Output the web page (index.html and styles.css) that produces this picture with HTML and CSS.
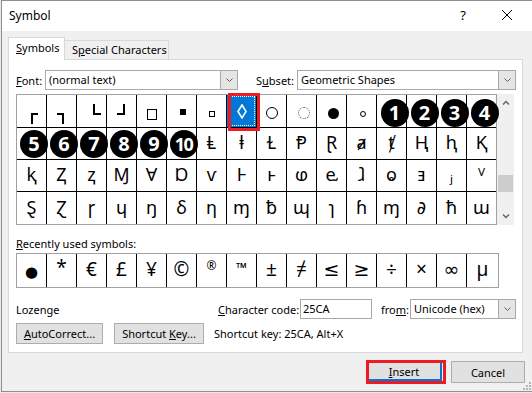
FILE: index.html
```html
<!DOCTYPE html>
<html lang="en">

<head>
    <meta charset="UTF-8">
    <meta name="viewport" content="width=device-width, initial-scale=1.0">
    <title>Symbol</title>
    <link rel="stylesheet" href="styles.css">
</head>

<body>
    <div class="dialog">
        <div class="titlebar">
            <span class="title">Symbol</span>
            <span class="tb-btn">?</span>
            <span class="tb-btn">
                <svg width="10" height="10" viewBox="0 0 10 10"><path d="M0 0L10 10M10 0L0 10" stroke="#000" stroke-width="1"/></svg>
            </span>
        </div>

        <div class="tabs">
            <div class="tab active"><u>S</u>ymbols</div>
            <div class="tab tab-spec">S<u>p</u>ecial Characters</div>
        </div>

        <div class="panel">
            <div class="font-row">
                <span class="lbl-font"><u>F</u>ont:</span>
                <div class="combo combo-font">
                    <span class="combo-text">(normal text)</span>
                    <span class="drop"><svg width="7" height="4" viewBox="0 0 7 4"><path d="M0.5 0.5L3.5 3.5L6.5 0.5" fill="none" stroke="#606060"/></svg></span>
                </div>
                <span class="lbl-subset">S<u>u</u>bset:</span>
                <div class="combo combo-subset">
                    <span class="combo-text">Geometric Shapes</span>
                    <span class="drop"><svg width="7" height="4" viewBox="0 0 7 4"><path d="M0.5 0.5L3.5 3.5L6.5 0.5" fill="none" stroke="#606060"/></svg></span>
                </div>
            </div>

            <div class="charmap">
                <div class="grid">
                    <!-- row 1 -->
                    <div class="s"><span class="crn crn-a"></span></div>
                    <div class="s"><span class="crn crn-b"></span></div>
                    <div class="s"><span class="crn crn-c"></span></div>
                    <div class="s"><span class="crn crn-d"></span></div>
                    <div class="s"><span class="sq-big"></span></div>
                    <div class="s"><span class="sq-fill"></span></div>
                    <div class="s"><span class="sq-small"></span></div>
                    <div class="s sel">
                        <svg width="10" height="15" viewBox="0 0 10 15"><path d="M5 1L9 7.5L5 14L1 7.5Z" fill="none" stroke="#fff" stroke-width="1.6"/></svg>
                        <span class="mark"></span>
                    </div>
                    <div class="s"><span class="ring"></span></div>
                    <div class="s"><span class="ring-dot"></span></div>
                    <div class="s"><span class="disc"></span></div>
                    <div class="s"><span class="ring-sm"></span></div>
                    <div class="s"><b class="num r1">1</b></div>
                    <div class="s"><b class="num r1">2</b></div>
                    <div class="s"><b class="num r1">3</b></div>
                    <div class="s"><b class="num r1">4</b></div>
                    <!-- row 2 -->
                    <div class="s"><b class="num">5</b></div>
                    <div class="s"><b class="num">6</b></div>
                    <div class="s"><b class="num">7</b></div>
                    <div class="s"><b class="num">8</b></div>
                    <div class="s"><b class="num">9</b></div>
                    <div class="s"><b class="num ten">10</b></div>
                    <div>Ⱡ</div>
                    <div>ⱡ</div>
                    <div>Ɫ</div>
                    <div>Ᵽ</div>
                    <div>Ɽ</div>
                    <div>ⱥ</div>
                    <div>ⱦ</div>
                    <div>Ⱨ</div>
                    <div>ⱨ</div>
                    <div>Ⱪ</div>
                    <!-- row 3 -->
                    <div>ⱪ</div>
                    <div>Ⱬ</div>
                    <div>ⱬ</div>
                    <div>Ɱ</div>
                    <div>Ɐ</div>
                    <div>Ɒ</div>
                    <div>ⱱ</div>
                    <div>Ⱶ</div>
                    <div>ⱶ</div>
                    <div>ⱷ</div>
                    <div>ⱸ</div>
                    <div>ⱹ</div>
                    <div>ⱺ</div>
                    <div>ⱻ</div>
                    <div>ⱼ</div>
                    <div>ⱽ</div>
                    <!-- row 4 -->
                    <div>Ȿ</div>
                    <div>Ɀ</div>
                    <div>ɼ</div>
                    <div>ɥ</div>
                    <div>ŋ</div>
                    <div>δ</div>
                    <div>η</div>
                    <div>ɱ</div>
                    <div>ƀ</div>
                    <div>ɰ</div>
                    <div>ɿ</div>
                    <div>ɦ</div>
                    <div>ɱ</div>
                    <div>∂</div>
                    <div>ħ</div>
                    <div>ɯ</div>
                </div>
                <div class="scrollbar">
                    <div class="sb-arrow"><svg width="8" height="5" viewBox="0 0 8 5"><path d="M1 4.5L4 1.5L7 4.5" fill="none" stroke="#606060" stroke-width="1.4"/></svg></div>
                    <div class="sb-track"><div class="sb-thumb"></div></div>
                    <div class="sb-arrow"><svg width="8" height="5" viewBox="0 0 8 5"><path d="M1 0.5L4 3.5L7 0.5" fill="none" stroke="#606060" stroke-width="1.4"/></svg></div>
                </div>
            </div>

            <div class="recent-label"><u>R</u>ecently used symbols:</div>
            <div class="recent">
                <div><span class="bullet">●</span></div>
                <div><span class="star">*</span></div>
                <div>€</div>
                <div>£</div>
                <div>¥</div>
                <div>©</div>
                <div><span class="reg">®</span></div>
                <div><span class="tm">™</span></div>
                <div>±</div>
                <div>≠</div>
                <div>≤</div>
                <div>≥</div>
                <div>÷</div>
                <div>×</div>
                <div>∞</div>
                <div>µ</div>
            </div>

            <div class="info-row">
                <span class="name">Lozenge</span>
                <span class="lbl-code"><u>C</u>haracter code:</span>
                <span class="input">25CA</span>
                <span class="lbl-from">fro<u>m</u>:</span>
                <div class="combo combo-from">
                    <span class="combo-text">Unicode (hex)</span>
                    <span class="drop"><svg width="7" height="4" viewBox="0 0 7 4"><path d="M0.5 0.5L3.5 3.5L6.5 0.5" fill="none" stroke="#606060"/></svg></span>
                </div>
            </div>

            <div class="btn-row">
                <button class="btn btn-auto"><u>A</u>utoCorrect...</button>
                <button class="btn btn-key">Shortcut <u>K</u>ey...</button>
                <span class="key-text">Shortcut key: 25CA, Alt+X</span>
            </div>
        </div>

        <div class="footer">
            <div class="insert-wrap">
                <button class="btn btn-insert"><u>I</u>nsert</button>
                <span class="red-mark"></span>
            </div>
            <button class="btn btn-cancel">Cancel</button>
        </div>

        <svg class="grip" width="8" height="8" viewBox="0 0 8 8">
            <rect x="6" y="0" width="2" height="2" fill="#b5b5b5"/>
            <rect x="3" y="3" width="2" height="2" fill="#b5b5b5"/>
            <rect x="6" y="3" width="2" height="2" fill="#b5b5b5"/>
            <rect x="0" y="6" width="2" height="2" fill="#b5b5b5"/>
            <rect x="3" y="6" width="2" height="2" fill="#b5b5b5"/>
            <rect x="6" y="6" width="2" height="2" fill="#b5b5b5"/>
        </svg>
    </div>
</body>

</html>
```

FILE: styles.css
```css
* {
    margin: 0;
    padding: 0;
    box-sizing: border-box;
}

html,
body {
    width: 100%;
    height: 100%;
    overflow: hidden;
}

body {
    background: #e9e9e9;
    font-family: "Noto Sans", "DejaVu Sans", sans-serif;
    font-size: 11px;
    color: #000;
}

u {
    text-decoration: underline;
    text-underline-offset: 1px;
}

.dialog {
    position: relative;
    margin-left: 1px;
    width: 531px;
    height: 392px;
    background: #f0f0f0;
    border-left: 1px solid #8f8f8f;
    border-bottom: 1px solid #8f8f8f;
}

/* title bar */
.titlebar {
    height: 31px;
    background: #fff;
    border-top: 1px solid #8f8f8f;
    display: flex;
    align-items: center;
    padding: 0 3px 2px 7px;
}

.title {
    flex: 1;
    font-size: 12px;
}

.tb-btn {
    width: 44px;
    display: flex;
    justify-content: center;
    font-size: 13px;
}

/* tabs */
.tabs {
    display: flex;
    align-items: flex-end;
    height: 28px;
    padding-left: 6px;
    position: relative;
    z-index: 1;
}

.tab {
    height: 19px;
    border: 1px solid #d9d9d9;
    border-bottom: 0;
    background: #f0f0f0;
    padding-left: 7px;
    line-height: 18px;
}

.tab.active {
    width: 57px;
    height: 23px;
    margin-bottom: -1px;
    background: #fff;
    line-height: 19px;
}

.tab-spec {
    width: 104px;
    border-left: 0;
}

.panel {
    margin-left: 6px;
    width: 515px;
    height: 294px;
    background: #fff;
    border: 1px solid #d9d9d9;
    padding: 10px 0 0 7px;
}

/* combos */
.font-row {
    display: flex;
    align-items: center;
    height: 20px;
}

.lbl-font {
    width: 29px;
}

.lbl-subset {
    width: 41px;
    margin-left: 18px;
}

.combo {
    display: flex;
    height: 20px;
    border: 1px solid #a9a9a9;
    background: #fff;
}

.combo-font {
    width: 193px;
}

.combo-subset {
    width: 219px;
}

.combo-from {
    width: 106px;
}

.combo-text {
    flex: 1;
    padding-left: 3px;
    line-height: 18px;
    white-space: nowrap;
}

.drop {
    width: 17px;
    background: #e5e5e5;
    border-left: 1px solid #a9a9a9;
    display: flex;
    align-items: center;
    justify-content: center;
}

/* character grid */
.charmap {
    display: flex;
    margin-top: 4px;
    height: 131px;
}

.grid {
    display: grid;
    grid-template-columns: repeat(16, 29px);
    grid-template-rows: 32px 31px 31px 32px;
    gap: 1px;
    background: #000;
    border: 1px solid #a0a0a0;
}

.grid > div {
    background: #fff;
    display: flex;
    align-items: center;
    justify-content: center;
    font-size: 18px;
    line-height: 1;
    padding-bottom: 3px;
}

.grid > div.s {
    padding-bottom: 0;
}

.grid > div.sel {
    position: relative;
    background: #0078d7;
    outline: 1px dotted #fff;
    outline-offset: -2px;
}

.mark {
    position: absolute;
    left: 1px;
    top: -2px;
    width: 32px;
    height: 38px;
    border: 3px solid #ed1c24;
    z-index: 2;
}

.crn {
    width: 7px;
    height: 11px;
    border: 0 solid #000;
}

.crn-a {
    border-top-width: 2px;
    border-left-width: 2px;
    margin: 14px 0 0 6px;
}

.crn-b {
    border-top-width: 2px;
    border-right-width: 2px;
    margin: 14px 2px 0 0;
}

.crn-c {
    width: 8px;
    border-bottom-width: 2px;
    border-left-width: 2px;
    margin: 0 0 4px 10px;
}

.crn-d {
    width: 8px;
    border-bottom-width: 2px;
    border-right-width: 2px;
    margin: 0 1px 4px 0;
}

.sq-big {
    width: 10px;
    height: 11px;
    border: 1px solid #000;
    margin-top: 6px;
}

.sq-fill {
    width: 6px;
    height: 6px;
    background: #000;
    margin: 1px 0 0 2px;
}

.sq-small {
    width: 6px;
    height: 6px;
    border: 1px solid #000;
    margin: 5px 0 0 1px;
}

.ring {
    width: 12px;
    height: 12px;
    border: 1.5px solid #000;
    border-radius: 50%;
    margin-top: 3px;
}

.ring-dot {
    width: 12px;
    height: 12px;
    border: 1px dotted #555;
    border-radius: 50%;
    margin: 4px 0 0 5px;
}

.disc {
    width: 11px;
    height: 11px;
    background: #000;
    border-radius: 50%;
    margin: 4px 0 0 3px;
}

.ring-sm {
    width: 6px;
    height: 6px;
    border: 1px solid #000;
    border-radius: 50%;
    margin: 5px 0 0 2px;
}

.num {
    position: relative;
    z-index: 1;
    flex: none;
    width: 28px;
    height: 28px;
    border-radius: 50%;
    background: #000;
    color: #fff;
    font-size: 20px;
    line-height: 28px;
    text-align: center;
    margin-left: 5px;
}

.num.r1 {
    margin: 4px 0 0 6px;
}

.num.ten {
    font-size: 18px;
    letter-spacing: -1.5px;
    text-indent: -1px;
}

/* scrollbar */
.scrollbar {
    width: 17px;
    background: #f0f0f0;
    display: flex;
    flex-direction: column;
}

.sb-arrow {
    height: 17px;
    display: flex;
    align-items: center;
    justify-content: center;
}

.sb-track {
    flex: 1;
}

.sb-thumb {
    height: 17px;
    margin: 64px 1px 0;
    background: #cdcdcd;
}

/* recently used */
.recent-label {
    margin-top: 11px;
    height: 17px;
    line-height: 15px;
}

.recent {
    display: grid;
    grid-template-columns: repeat(15, 29px) 31px;
    grid-template-rows: 33px;
    gap: 1px;
    width: max-content;
    background: #000;
    border: 1px solid #a0a0a0;
}

.recent > div {
    background: #fff;
    display: flex;
    align-items: center;
    justify-content: center;
    font-size: 19px;
    line-height: 1;
    padding-bottom: 2px;
}

.bullet {
    font-size: 15px;
    margin-top: 3px;
}

.star {
    margin-bottom: 4px;
}

.reg {
    font-size: 12px;
    margin-bottom: 8px;
}

.tm {
    font-size: 14px;
    margin-bottom: 4px;
}

/* bottom rows */
.info-row {
    display: flex;
    align-items: center;
    height: 20px;
    margin-top: 11px;
}

.name {
    width: 202px;
}

.lbl-code {
    width: 82px;
}

.input {
    width: 72px;
    height: 20px;
    border: 1px solid #a9a9a9;
    background: #fff;
    padding-left: 2px;
    line-height: 18px;
}

.lbl-from {
    width: 29px;
    margin-left: 9px;
}

.btn-row {
    display: flex;
    align-items: center;
    height: 21px;
    margin-top: 4px;
}

.btn {
    height: 21px;
    border: 1px solid #adadad;
    background: #e1e1e1;
    font: inherit;
    color: #000;
}

.btn-auto {
    width: 87px;
}

.btn-key {
    width: 90px;
    margin-left: 11px;
}

.key-text {
    margin-left: 10px;
}

.footer {
    display: flex;
    justify-content: flex-end;
    align-items: flex-start;
    padding: 8px 7px 0 0;
}

.insert-wrap {
    position: relative;
    margin-right: 9px;
}

.btn-insert {
    display: block;
    width: 76px;
    height: 20px;
    border: 1px solid #0078d7;
    box-shadow: inset 0 0 0 1px #0078d7;
}

.red-mark {
    position: absolute;
    left: 0;
    top: -1px;
    width: 80px;
    height: 24px;
    border: 3px solid #ed1c24;
}

.btn-cancel {
    width: 74px;
    height: 22px;
}

.grip {
    position: absolute;
    right: 1px;
    bottom: 1px;
}
```
